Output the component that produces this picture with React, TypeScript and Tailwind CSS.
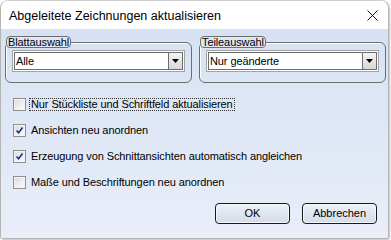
import { useState } from "react";

const FONT = { fontFamily: '"Liberation Sans", Arial, sans-serif' };

function Check({ checked }: { checked: boolean }) {
  return (
    <span className="flex h-[13px] w-[13px] shrink-0 items-center justify-center border border-[#8e8f8f] bg-white">
      <span className="flex h-[11px] w-[11px] items-center justify-center border border-[#f4f4f4] bg-gradient-to-br from-[#dcdcdc] to-[#fbfbfb]">
        {checked && (
          <svg width="9" height="9" viewBox="0 0 9 9" aria-hidden>
            <path d="M1.5 4.5 L3.6 6.8 L7.6 1.4" fill="none" stroke="#1c2f8c" strokeWidth="1.6" />
          </svg>
        )}
      </span>
    </span>
  );
}

function Combo({ value }: { value: string }) {
  return (
    <div className="mx-[6px] mt-[2px] flex h-[22px] items-center border border-[#a3a3a3] bg-white p-px">
      <div className="flex h-full flex-1 items-center border border-[#6d6d6d] border-r-0 pl-[1px] text-[11px] tracking-[-0.1px] text-black">
        {value}
      </div>
      <div className="flex h-full w-[15px] items-center justify-center border border-[#6d6d6d] bg-gradient-to-b from-[#f3f3f3] to-[#d8d8d8]">
        <svg width="7" height="4" viewBox="0 0 7 4" aria-hidden>
          <path d="M0 0 H7 L3.5 4 Z" fill="#000" />
        </svg>
      </div>
    </div>
  );
}

function Group({ label, value }: { label: string; value: string }) {
  return (
    <fieldset className="h-[47px] w-[187px] rounded-[6px] border border-[#6e6e6e] p-0 shadow-[inset_1px_1px_0_#ffffff]">
      <legend className="ml-0 rounded-[4px] border border-[#6e6e6e] bg-[#dfe7f4] px-px text-[11px] tracking-[-0.1px] leading-[10px] text-black">
        {label}
      </legend>
      <Combo value={value} />
    </fieldset>
  );
}

const OPTIONS = [
  { label: "Nur Stückliste und Schriftfeld aktualisieren", checked: false, focus: true },
  { label: "Ansichten neu anordnen", checked: true, focus: false },
  { label: "Erzeugung von Schnittansichten automatisch angleichen", checked: true, focus: false },
  { label: "Maße und Beschriftungen neu anordnen", checked: false, focus: false },
];

export default function App() {
  const [opts] = useState(OPTIONS);

  return (
    <div className="h-[240px] w-[391px] overflow-hidden bg-white" style={FONT}>
      <div className="flex h-[239px] w-[389px] flex-col overflow-hidden rounded-t-[8px] rounded-b-[3px] border border-[#b4b4b4] border-t-[#d0d0d0] shadow-[1px_1px_2px_rgba(0,0,0,0.25)]">
        {/* title bar */}
        <div className="flex h-[28px] shrink-0 items-center justify-between bg-white pl-[8px] pr-[10px]">
          <span className="pt-[2px] text-[12.5px] text-black">Abgeleitete Zeichnungen aktualisieren</span>
          <svg width="11" height="11" viewBox="0 0 11 11" aria-hidden>
            <path d="M0.5 0.5 L10.5 10.5 M10.5 0.5 L0.5 10.5" stroke="#111" strokeWidth="1" />
          </svg>
        </div>

        {/* body */}
        <div className="flex flex-1 flex-col bg-gradient-to-b from-[#d6e2f3] to-[#e9eef9] pl-[4px] pr-[2px] pt-[7px]">
          <div className="flex gap-[7px]">
            <Group label="Blattauswahl" value="Alle" />
            <Group label="Teileauswahl" value="Nur geänderte" />
          </div>

          <div className="mt-[15px] flex flex-col gap-[13px] pl-[8px]">
            {opts.map(o => (
              <div key={o.label} className="flex h-[13px] items-center gap-[4px] text-[11px] tracking-[-0.1px] text-black">
                <Check checked={o.checked} />
                <span
                  className={`px-px leading-[11px] ${
                    o.focus ? "outline outline-1 outline-dotted outline-[#333]" : ""
                  }`}
                >
                  {o.label}
                </span>
              </div>
            ))}
          </div>

          <div className="mt-[14px] flex justify-end gap-[12px] pr-[9px]">
            {["OK", "Abbrechen"].map(b => (
              <button
                key={b}
                className="h-[21px] w-[75px] rounded-[4px] border border-[#1a1a1a] bg-gradient-to-b from-[#eef2f8] to-[#d3dbe8] text-[11px] text-black shadow-[inset_0_0_0_1px_#f6f8fb]"
              >
                {b}
              </button>
            ))}
          </div>
        </div>
      </div>
    </div>
  );
}
